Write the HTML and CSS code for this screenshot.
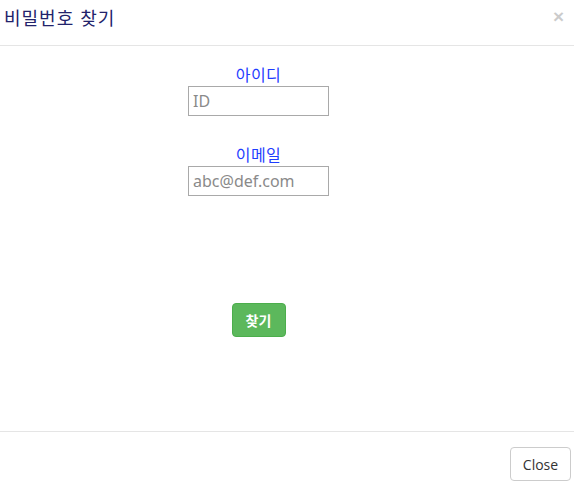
FILE: index.html
```html
<!DOCTYPE html>
<html lang="ko">
<head>
<meta charset="utf-8">
<link rel="stylesheet" href="styles.css">
</head>
<body>
<div class="modal">
  <div class="modal-header">
    <h4 class="modal-title">비밀번호 찾기</h4>
    <span class="close">×</span>
  </div>
  <div class="modal-body">
    <div class="form">
      <label class="field-label" for="id">아이디</label>
      <input class="field-input" id="id" type="text" placeholder="ID">
      <label class="field-label second" for="email">이메일</label>
      <input class="field-input" id="email" type="text" placeholder="abc@def.com">
      <button class="btn-find" type="button">찾기</button>
    </div>
  </div>
  <div class="modal-footer">
    <button class="btn-close" type="button">Close</button>
  </div>
</div>
</body>
</html>
```
FILE: styles.css
```css
html, body {
  margin: 0;
  padding: 0;
  background: #fff;
}
body {
  font-family: "Noto Sans", "Noto Sans CJK KR", sans-serif;
  width: 574px;
  height: 481px;
  overflow: hidden;
}
.modal {
  width: 574px;
}
.modal-header {
  display: flex;
  justify-content: space-between;
  align-items: flex-start;
  height: 45px;
  box-sizing: content-box;
  padding: 0 0 0 4px;
  border-bottom: 1px solid #e5e5e5;
}
.modal-title {
  margin: 0;
  padding-top: 4px;
  font-family: "Noto Sans CJK KR", sans-serif;
  font-weight: normal;
  font-size: 18px;
  letter-spacing: 1px;
  line-height: 26px;
  color: #22226b;
}
.close {
  font-family: "Liberation Sans", sans-serif;
  font-size: 19px;
  font-weight: bold;
  line-height: 19px;
  color: #000;
  opacity: 0.2;
  padding: 7px 10px 0 0;
}
.modal-body {
  height: 386px;
  box-sizing: border-box;
  border-bottom: 1px solid #e5e5e5;
  padding-top: 18px;
}
.form {
  width: 517px;
  display: flex;
  flex-direction: column;
  align-items: center;
}
.field-label {
  display: block;
  font-family: "Noto Sans CJK KR", sans-serif;
  font-size: 16px;
  line-height: 20px;
  letter-spacing: 0.5px;
  color: #1f3dff;
  margin-bottom: 2px;
}
.field-label.second {
  margin-top: 28px;
}
.field-input {
  box-sizing: border-box;
  width: 141px;
  height: 30px;
  margin: 0;
  padding: 0 4px;
  border: 1px solid #a9a9a9;
  border-radius: 0;
  font-family: "Noto Sans", "Noto Sans CJK KR", sans-serif;
  font-size: 16px;
  color: #333;
  outline: none;
}
.field-input::placeholder {
  color: #8a8a8a;
}
.btn-find {
  margin-top: 107px;
  width: 54px;
  height: 34px;
  box-sizing: border-box;
  border: 1px solid #4cae4c;
  border-radius: 4px;
  background: #5cb85c;
  color: #fff;
  font-family: "Noto Sans CJK KR", sans-serif;
  font-size: 14px;
  font-weight: bold;
  padding: 0;
}
.modal-footer {
  display: flex;
  justify-content: flex-end;
  padding: 15px 3px 0 0;
}
.btn-close {
  width: 61px;
  height: 34px;
  box-sizing: border-box;
  border: 1px solid #ccc;
  border-radius: 4px;
  background: #fff;
  color: #333;
  font-family: "Open Sans", sans-serif;
  font-size: 14px;
  padding: 0;
}
```
